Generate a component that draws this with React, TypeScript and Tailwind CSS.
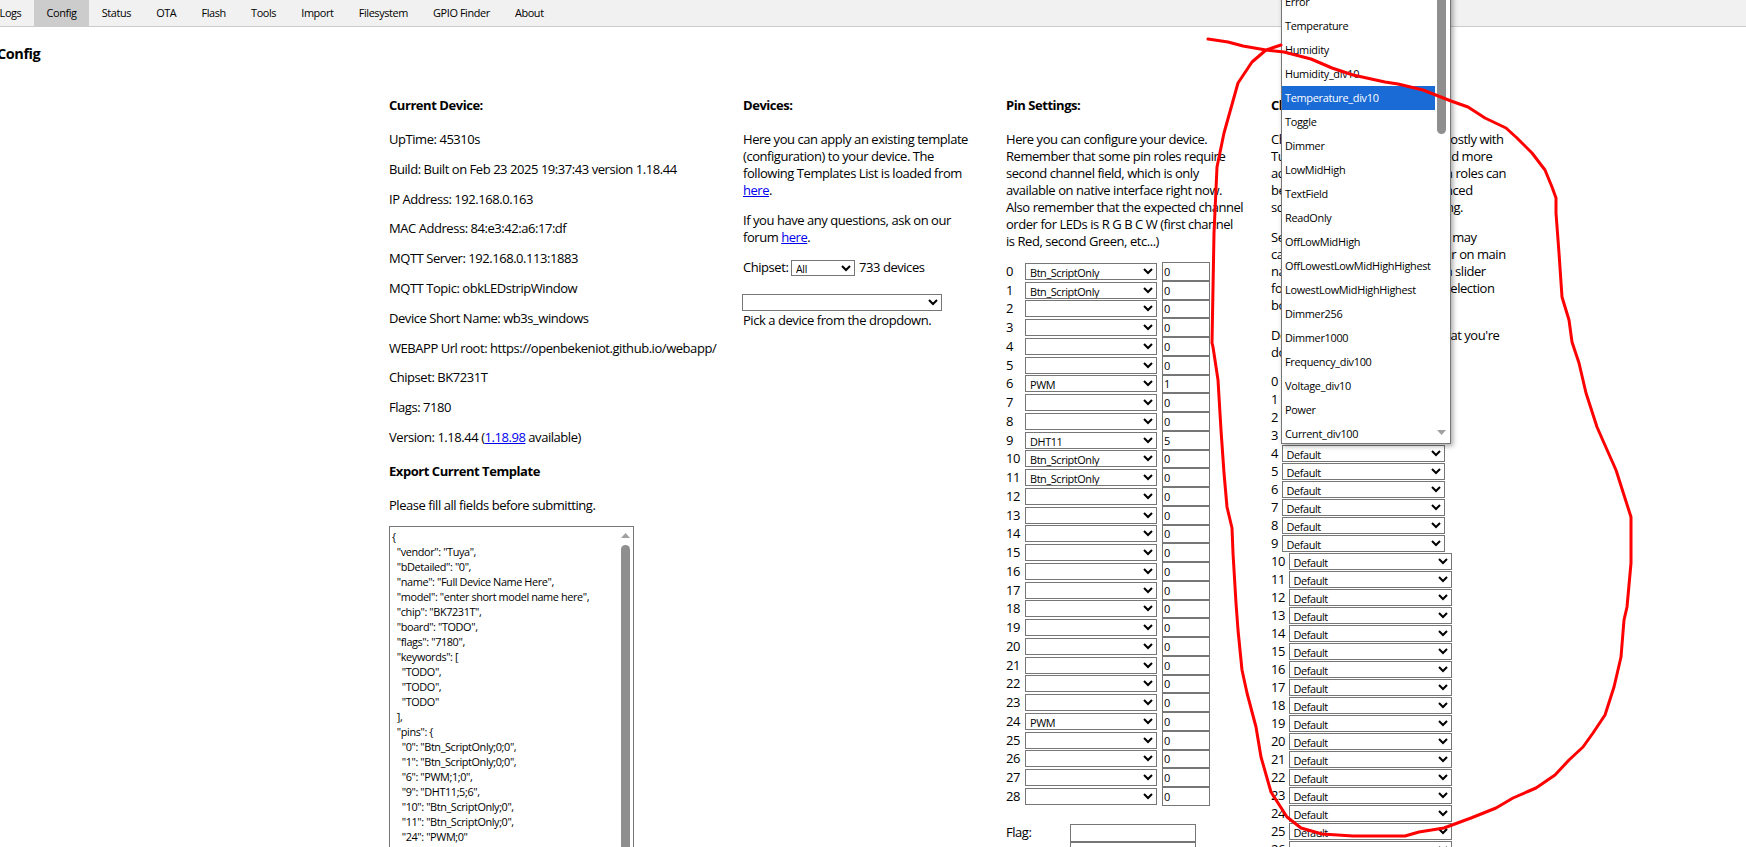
const NAV_TABS = ['Logs', 'Config', 'Status', 'OTA', 'Flash', 'Tools', 'Import', 'Filesystem', 'GPIO Finder', 'About'];

const DEVICE_INFO = [
  'UpTime: 45310s',
  'Build: Built on Feb 23 2025 19:37:43 version 1.18.44',
  'IP Address: 192.168.0.163',
  'MAC Address: 84:e3:42:a6:17:df',
  'MQTT Server: 192.168.0.113:1883',
  'MQTT Topic: obkLEDstripWindow',
  'Device Short Name: wb3s_windows',
  'WEBAPP Url root: https://openbekeniot.github.io/webapp/',
  'Chipset: BK7231T',
  'Flags: 7180',
];

const TEMPLATE = `{
  "vendor": "Tuya",
  "bDetailed": "0",
  "name": "Full Device Name Here",
  "model": "enter short model name here",
  "chip": "BK7231T",
  "board": "TODO",
  "flags": "7180",
  "keywords": [
    "TODO",
    "TODO",
    "TODO"
  ],
  "pins": {
    "0": "Btn_ScriptOnly;0;0",
    "1": "Btn_ScriptOnly;0;0",
    "6": "PWM;1;0",
    "9": "DHT11;5;6",
    "10": "Btn_ScriptOnly;0",
    "11": "Btn_ScriptOnly;0",
    "24": "PWM;0"
  },`;

const PIN_ROLES: Record<number, string> = { 0: 'Btn_ScriptOnly', 1: 'Btn_ScriptOnly', 6: 'PWM', 9: 'DHT11', 10: 'Btn_ScriptOnly', 11: 'Btn_ScriptOnly', 24: 'PWM' };
const PIN_VALUES: Record<number, string> = { 6: '1', 9: '5' };

const CHANNEL_TYPES = [
  'Error', 'Temperature', 'Humidity', 'Humidity_div10', 'Temperature_div10', 'Toggle', 'Dimmer', 'LowMidHigh', 'TextField', 'ReadOnly',
  'OffLowMidHigh', 'OffLowestLowMidHighHighest', 'LowestLowMidHighHighest', 'Dimmer256', 'Dimmer1000', 'Frequency_div100', 'Voltage_div10', 'Power', 'Current_div100',
];

const SCRIBBLE =
  'M1208 39 L1228 42 L1243 46 L1266 50 L1284 52 L1311 59 L1332 68 L1353 75 L1385 82 L1398 84 L1423 90 L1451 101 L1468 107 L1485 118 L1506 128 L1517 138 L1532 153 L1545 170 L1552 187 L1556 198 L1556 213 L1559 253 L1562 297 L1569 320 L1572 342 L1579 363 L1586 393 L1597 427 L1604 443 L1616 470 L1623 492 L1631 517 L1631 563 L1627 607 L1624 620 L1621 657 L1614 687 L1605 715 L1593 733 L1583 747 L1569 760 L1555 775 L1536 788 L1529 791 L1513 798 L1496 808 L1471 818 L1444 828 L1419 832 L1405 836 L1353 836 L1322 834 L1301 828 L1287 817 L1271 792 L1261 757 L1256 727 L1247 693 L1242 670 L1238 630 L1236 603 L1233 553 L1232 528 L1227 507 L1224 473 L1221 430 L1218 380 L1213 347 L1212 343 L1214 233 L1217 167 L1224 133 L1238 83 L1252 62 L1266 50 L1281 45';

function Heading({ children }: { children: React.ReactNode }) {
  return <h3 className="h-[17px] mb-[17px] font-bold leading-[17px]">{children}</h3>;
}

function NavBar() {
  return (
    <div className="relative h-[27px] bg-[#f1f1f1] border-b border-[#cccccc]">
      <div className="flex absolute left-[-13px] top-0 h-[26px]">
        {NAV_TABS.map((tab) => (
          <div
            key={tab}
            className={`h-[26px] px-[12.6px] text-[10.9px] leading-[26px] tracking-[-0.4px] whitespace-nowrap ${tab === 'Config' ? 'bg-[#cccccc]' : ''}`}
          >
            {tab}
          </div>
        ))}
      </div>
    </div>
  );
}

function CurrentDevice() {
  return (
    <div className="w-[354px] shrink-0">
      <Heading>Current Device:</Heading>
      {DEVICE_INFO.map((line) => (
        <p key={line} className="h-[17px] mb-[12.8px] whitespace-nowrap">{line}</p>
      ))}
      <p className="h-[17px] mb-[17px] whitespace-nowrap">
        Version: 1.18.44 (<a href="#" className="text-[#0000ee] underline">1.18.98</a> available)
      </p>
      <Heading>Export Current Template</Heading>
      <p className="h-[17px] mb-[12px] whitespace-nowrap">Please fill all fields before submitting.</p>
      <div className="relative w-[245px] h-[400px]">
        <textarea
          readOnly
          value={TEMPLATE}
          className="block w-full h-full border border-[#767676] p-[2px] text-[10.9px] leading-[15px] tracking-[-0.4px] overflow-hidden resize-none whitespace-pre outline-none"
        />
        <div className="absolute right-[4px] top-[1px] w-[9px]">
          <svg width="9" height="8" viewBox="0 0 9 8" className="mt-[5px]"><polygon points="4.5,1 9,6 0,6" fill="#a0a0a0" /></svg>
          <div className="mt-[5px] h-[380px] rounded-[5px] bg-[#8f8f8f]" />
        </div>
      </div>
    </div>
  );
}

function Devices() {
  return (
    <div className="w-[264px] shrink-0">
      <Heading>Devices:</Heading>
      <p className="mb-[13px] w-[240px]">
        Here you can apply an existing template<br />
        (configuration) to your device. The<br />
        following Templates List is loaded from<br />
        <a href="#" className="text-[#0000ee] underline">here</a>.
      </p>
      <p className="mb-[13px]">
        If you have any questions, ask on our<br />
        forum <a href="#" className="text-[#0000ee] underline">here</a>.
      </p>
      <div className="flex items-center h-[17px] whitespace-nowrap">
        Chipset:
        <select className="absolute left-[791px] w-[64px] h-[16px] border border-[#767676] bg-white text-[10.5px] tracking-[-0.3px]">
          <option>All</option>
        </select>
        <span className="absolute left-[859px]">733 devices</span>
      </div>
      <select className="block mt-[18px] -ml-[1px] w-[200px] h-[17px] border border-[#767676] bg-white text-[11px]">
        <option></option>
      </select>
      <p className="mt-[1px] whitespace-nowrap">Pick a device from the dropdown.</p>
    </div>
  );
}

function PinSettings() {
  return (
    <div className="w-[264px] shrink-0 -ml-[1px] mr-[1px]">
      <Heading>Pin Settings:</Heading>
      <p className="whitespace-nowrap mb-[12px]">
        Here you can configure your device.<br />
        Remember that some pin roles require<br />
        second channel field, which is only<br />
        available on native interface right now.<br />
        Also remember that the expected channel<br />
        order for LEDs is R G B C W (first channel<br />
        is Red, second Green, etc...)
      </p>
      {Array.from({ length: 29 }, (_, i) => (
        <div key={i} className="flex items-center h-[18.75px]">
          <span className="w-[19px] shrink-0">{i}</span>
          <select
            defaultValue={PIN_ROLES[i] ?? ''}
            className="w-[132px] h-[17px] border border-[#767676] bg-white text-[10.9px] tracking-[-0.4px]"
          >
            <option value=""></option>
            <option>Btn_ScriptOnly</option>
            <option>PWM</option>
            <option>DHT11</option>
          </select>
          <input
            readOnly
            value={PIN_VALUES[i] ?? '0'}
            className="ml-[5px] w-[48px] h-[18.75px] border border-[#767676] px-[1px] text-[11px] outline-none"
          />
        </div>
      ))}
      <div className="flex items-center mt-[18px] h-[18px]">
        <span className="w-[64px] shrink-0">Flag:</span>
        <input readOnly className="w-[126px] h-[18px] border border-[#767676]" />
      </div>
      <div className="ml-[64px] w-[126px] h-[18px] border border-[#767676]" />
    </div>
  );
}

function ChannelTypes() {
  return (
    <div className="w-[240px] shrink-0">
      <Heading>Channel Types:</Heading>
      <p className="whitespace-nowrap mb-[13px]">
        Channel types are often used mostly with<br />
        TuyaMCU device, where they add more<br />
        advanced modes also. Some pin roles can<br />
        be configured to allow for advanced<br />
        scenarios with advanced scripting.
      </p>
      <p className="whitespace-nowrap mb-[13px]">
        Setting the correct channel type may<br />
        cause the channel to also appear on main<br />
        navigation pages, for example, a slider<br />
        for a dimmer and a dropdown selection<br />
        box.
      </p>
      <p className="whitespace-nowrap mb-[11px]">
        Do not change it unless sure what you're<br />
        doing.
      </p>
      {Array.from({ length: 29 }, (_, i) => (
        <div key={i} className="flex items-center h-[18px]">
          <span className={i < 10 ? 'w-[10.5px] shrink-0' : 'w-[17.5px] shrink-0'}>{i}</span>
          <select className="w-[163px] h-[17px] border border-[#767676] bg-white text-[10.9px] tracking-[-0.4px]">
            <option>Default</option>
          </select>
        </div>
      ))}
    </div>
  );
}

function ChannelDropdown() {
  return (
    <div className="absolute left-[1281px] top-[-11px] w-[170px] h-[455px] bg-white border border-[#767676] shadow-[2px_2px_5px_rgba(0,0,0,0.35)] overflow-hidden text-[10.9px] tracking-[-0.3px]">
      {CHANNEL_TYPES.map((type) => (
        <div
          key={type}
          className={`h-[24px] w-[153px] pl-[3px] leading-[24px] whitespace-nowrap ${type === 'Temperature_div10' ? 'bg-[#1b6bd6] text-white' : 'text-black'}`}
        >
          {type}
        </div>
      ))}
      <div className="absolute right-[4px] top-0 w-[9px] h-[144px] rounded-b-[5px] bg-[#8f8f8f]" />
      <svg width="9" height="6" viewBox="0 0 9 6" className="absolute right-[4px] bottom-[7px]">
        <polygon points="0,0 9,0 4.5,5" fill="#a0a0a0" />
      </svg>
    </div>
  );
}

export default function App() {
  return (
    <div className="relative h-[847px] w-[1746px] overflow-hidden bg-white text-black text-[13px] leading-[17px] tracking-[-0.45px] font-['Open_Sans',sans-serif]">
      <NavBar />
      <h2 className="-ml-[3px] mt-[17px] h-[20px] text-[14.5px] font-bold leading-[20px]">Config</h2>
      <div className="flex pl-[389px] pt-[33px]">
        <CurrentDevice />
        <Devices />
        <PinSettings />
        <ChannelTypes />
      </div>
      <ChannelDropdown />
      <svg className="absolute inset-0 pointer-events-none" width="1746" height="847" viewBox="0 0 1746 847" fill="none">
        <path d={SCRIBBLE} stroke="#ff0000" strokeWidth="3" strokeLinejoin="round" strokeLinecap="round" />
      </svg>
    </div>
  );
}
